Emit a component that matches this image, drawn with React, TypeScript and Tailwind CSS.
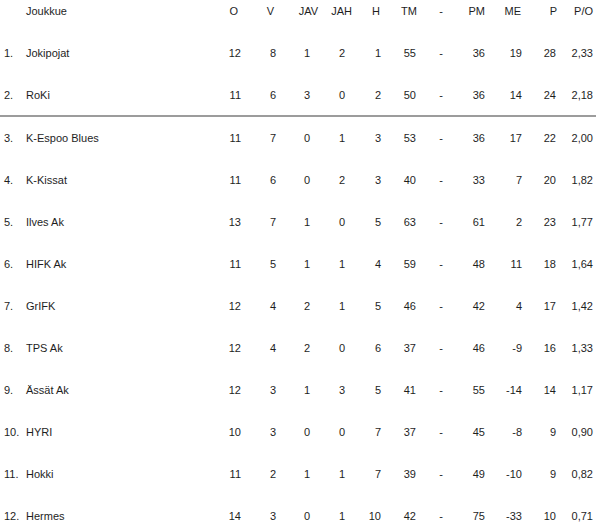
import React from "react";

type Row = [string, string, number, number, number, number, number, number, number, number, number, string];

const rows: Row[] = [
  ["1.", "Jokipojat", 12, 8, 1, 2, 1, 55, 36, 19, 28, "2,33"],
  ["2.", "RoKi", 11, 6, 3, 0, 2, 50, 36, 14, 24, "2,18"],
  ["3.", "K-Espoo Blues", 11, 7, 0, 1, 3, 53, 36, 17, 22, "2,00"],
  ["4.", "K-Kissat", 11, 6, 0, 2, 3, 40, 33, 7, 20, "1,82"],
  ["5.", "Ilves Ak", 13, 7, 1, 0, 5, 63, 61, 2, 23, "1,77"],
  ["6.", "HIFK Ak", 11, 5, 1, 1, 4, 59, 48, 11, 18, "1,64"],
  ["7.", "GrIFK", 12, 4, 2, 1, 5, 46, 42, 4, 17, "1,42"],
  ["8.", "TPS Ak", 12, 4, 2, 0, 6, 37, 46, -9, 16, "1,33"],
  ["9.", "Ässät Ak", 12, 3, 1, 3, 5, 41, 55, -14, 14, "1,17"],
  ["10.", "HYRI", 10, 3, 0, 0, 7, 37, 45, -8, 9, "0,90"],
  ["11.", "Hokki", 11, 2, 1, 1, 7, 39, 49, -10, 9, "0,82"],
  ["12.", "Hermes", 14, 3, 0, 1, 10, 42, 75, -33, 10, "0,71"],
];

const grid =
  "grid grid-cols-[26px_174px_42px_35px_42px_34px_29px_36px_26px_42px_37px_35px_36px]";

function DataRow({ r, h }: { r: Row; h: string }) {
  return (
    <div className={`${grid} ${h} items-center`}>
      <div className="pl-[4px]">{r[0]}</div>
      <div>{r[1]}</div>
      <div className="text-right pr-[1px]">{r[2]}</div>
      <div className="text-right pr-[1px]">{r[3]}</div>
      <div className="text-right pr-[9px]">{r[4]}</div>
      <div className="text-right pr-[8px]">{r[5]}</div>
      <div className="text-right pr-[1px]">{r[6]}</div>
      <div className="text-right pr-[2px]">{r[7]}</div>
      <div className="text-right pr-[1px]">-</div>
      <div className="text-right pr-[1px]">{r[8]}</div>
      <div className="text-right pr-[1px]">{r[9]}</div>
      <div className="text-right pr-[2px]">{r[10]}</div>
      <div className="text-right pr-[1px]">{r[11]}</div>
    </div>
  );
}

export default function App() {
  return (
    <div
      className="w-[600px] h-[527px] bg-white text-[#1e1e1e] text-[11px] leading-[14px] overflow-hidden"
      style={{ fontFamily: '"Liberation Sans", Arial, sans-serif' }}
    >
      <div className={`${grid} h-[32px] items-start pt-[4px]`}>
        <div></div>
        <div>Joukkue</div>
        <div className="text-right pr-[4px]">O</div>
        <div className="text-right pr-[3px]">V</div>
        <div className="text-right pr-[1px]">JAV</div>
        <div className="text-right pr-[1px]">JAH</div>
        <div className="text-right pr-[2px]">H</div>
        <div className="text-right pr-[1px]">TM</div>
        <div className="text-right pr-[1px]">-</div>
        <div className="text-right pr-[1px]">PM</div>
        <div className="text-right pr-[2px]">ME</div>
        <div className="text-right pr-[1px]">P</div>
        <div className="text-right pr-[1px]">P/O</div>
      </div>
      <DataRow r={rows[0]} h="h-[42px]" />
      <DataRow r={rows[1]} h="h-[41px]" />
      <div className="w-[596px] h-[2px] bg-[#9c9c9c]" />
      {rows.slice(2).map((r) => (
        <DataRow key={r[0]} r={r} h="h-[42px]" />
      ))}
    </div>
  );
}
